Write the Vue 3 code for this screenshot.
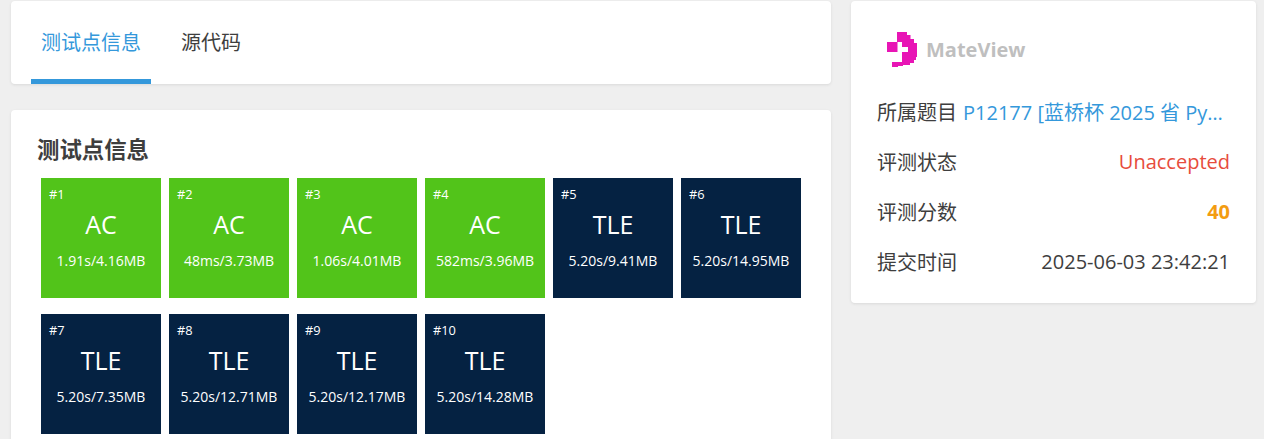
<template>
  <div class="page">
    <div class="main">
      <div class="card tabs">
        <div
          v-for="(tab, i) in tabs"
          :key="tab"
          class="tab"
          :class="{ active: i === 0 }"
        >
          {{ tab }}
        </div>
      </div>
      <div class="card section">
        <h2 class="section-title">测试点信息</h2>
        <div class="cases">
          <div
            v-for="(c, i) in cases"
            :key="i"
            class="case"
            :class="c.status === 'AC' ? 'ac' : 'tle'"
          >
            <div class="case-id">#{{ i + 1 }}</div>
            <div class="case-status">{{ c.status }}</div>
            <div class="case-info">{{ c.info }}</div>
          </div>
        </div>
      </div>
    </div>
    <div class="side">
      <div class="card info">
        <div class="brand">
          <svg class="logo" width="30" height="35" viewBox="0 0 30 35">
            <path
              fill="#e815b5"
              d="M10 0H20V3H23.5V7H27V11H30V25H29V28H27V31H23V33H16V34H11V35H5V30H15V20H21V15H15V10H10Z"
            />
            <path fill="#e815b5" d="M0 10H10.5V20H0Z" />
          </svg>
          <span class="brand-name">MateView</span>
        </div>
        <div class="row">
          <span class="label">所属题目</span>
          <a class="value link">P12177 [蓝桥杯 2025 省 Python B] 旗帜</a>
        </div>
        <div class="row">
          <span class="label">评测状态</span>
          <span class="value red">Unaccepted</span>
        </div>
        <div class="row">
          <span class="label">评测分数</span>
          <span class="value score">40</span>
        </div>
        <div class="row">
          <span class="label">提交时间</span>
          <span class="value">2025-06-03 23:42:21</span>
        </div>
      </div>
    </div>
  </div>
</template>

<script setup>
const tabs = ["测试点信息", "源代码"];

const cases = [
  { status: "AC", info: "1.91s/4.16MB" },
  { status: "AC", info: "48ms/3.73MB" },
  { status: "AC", info: "1.06s/4.01MB" },
  { status: "AC", info: "582ms/3.96MB" },
  { status: "TLE", info: "5.20s/9.41MB" },
  { status: "TLE", info: "5.20s/14.95MB" },
  { status: "TLE", info: "5.20s/7.35MB" },
  { status: "TLE", info: "5.20s/12.71MB" },
  { status: "TLE", info: "5.20s/12.17MB" },
  { status: "TLE", info: "5.20s/14.28MB" },
];
</script>

<style>
html,
body {
  margin: 0;
  height: 439px;
  overflow: hidden;
  background: #efefef;
}
</style>

<style scoped>
.page {
  display: flex;
  gap: 20px;
  padding: 1px 8px 0 11px;
  font-family: "Open Sans", "Noto Sans CJK SC", sans-serif;
  font-size: 20px;
  color: #3e3e3e;
}

.main {
  width: 820px;
  flex-shrink: 0;
}

.side {
  flex: 1;
  min-width: 0;
}

.card {
  background: #fff;
  border-radius: 4px;
  box-shadow: 0 1px 3px rgba(26, 26, 26, 0.1);
}

.tabs {
  display: flex;
  gap: 20px;
  height: 83px;
  padding-left: 20px;
  margin-bottom: 26px;
}

.tab {
  padding: 0 10px;
  font-size: 20px;
  line-height: 83px;
  height: 83px;
  box-sizing: border-box;
}

.tab.active {
  color: #3498db;
  border-bottom: 5px solid #3498db;
}

.section {
  padding: 22px 26px 30px;
}

.section-title {
  margin: 0;
  font-size: 22.4px;
  line-height: 36px;
  font-weight: 700;
}

.cases {
  display: flex;
  flex-wrap: wrap;
  margin-top: 2px;
}

.case {
  position: relative;
  width: 120px;
  height: 120px;
  margin: 8px 4px;
  color: #fff;
  text-align: center;
}

.case.ac {
  background: #52c41a;
}

.case.tle {
  background: #052242;
}

.case-id {
  position: absolute;
  top: 7px;
  left: 8px;
  font-size: 12.8px;
  font-weight: 500;
  line-height: 18px;
}

.case-status {
  padding-top: 28px;
  font-size: 25px;
  line-height: 36px;
}

.case-info {
  margin-top: 9px;
  font-size: 14px;
  line-height: 20px;
}

.info {
  padding: 23px 26px 16px;
  height: 302px;
  box-sizing: border-box;
}

.brand {
  display: flex;
  align-items: center;
  height: 51px;
  padding-left: 10px;
  margin-bottom: 11px;
}

.logo {
  flex-shrink: 0;
}

.brand-name {
  margin-left: 9px;
  font-size: 20px;
  font-weight: 700;
  color: #bfbfbf;
}

.row {
  display: flex;
  justify-content: space-between;
  align-items: center;
  gap: 6px;
  height: 50px;
}

.label {
  flex-shrink: 0;
}

.value {
  min-width: 0;
  white-space: nowrap;
  overflow: hidden;
  text-overflow: ellipsis;
}

.link {
  color: #3498db;
}

.red {
  color: #e74c3c;
}

.score {
  color: #f39c11;
  font-weight: 700;
}
</style>
